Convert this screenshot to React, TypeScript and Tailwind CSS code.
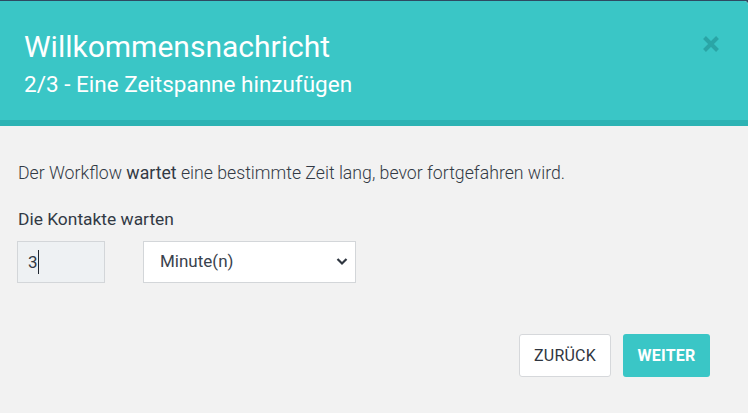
import React, { useState } from 'react';

const CloseIcon: React.FC = () => (
  <svg width="18" height="18" viewBox="0 0 18 18" aria-hidden="true">
    <path d="M2.5 2.5 L15.5 15.5 M15.5 2.5 L2.5 15.5" stroke="#2aa5a6" strokeWidth="4" strokeLinecap="butt" />
  </svg>
);

const App: React.FC = () => {
  const [amount, setAmount] = useState('3');
  const [unit, setUnit] = useState('minutes');

  return (
    <div className="w-[748px] h-[413px] bg-[#2e4a62] pt-px overflow-hidden" style={{ fontFamily: 'Roboto, "Liberation Sans", sans-serif' }}>
      <div className="h-full flex flex-col bg-[#f2f2f2] rounded-tr-[4px] overflow-hidden">
        {/* header */}
        <div className="bg-[#3ac6c6] border-b-[6px] border-[#2db3b4] h-[125px] pl-6 pr-[28px] pt-[27px] flex justify-between">
          <div className="text-white">
            <h1 className="text-[30px] leading-[38px] font-normal">Willkommensnachricht</h1>
            <h2 className="text-[22.5px] leading-[28px] mt-[4px] font-normal">2/3 - Eine Zeitspanne hinzufügen</h2>
          </div>
          <button className="h-[18px] mt-[7px]">
            <CloseIcon />
          </button>
        </div>

        {/* body */}
        <div className="flex-1 px-[18px] pt-[35px] text-[#323a45]">
          <p className="text-[17.7px] leading-[24px] font-light">
            Der Workflow <span className="font-normal">wartet</span> eine bestimmte Zeit lang, bevor fortgefahren wird.
          </p>
          <label className="block mt-[22px] text-[17.4px] leading-[24px] font-normal">Die Kontakte warten</label>
          <div className="flex items-center gap-[38px] mt-[10px]">
            <div className="relative -ml-px">
              <input
                value={amount}
                onChange={(e) => setAmount(e.target.value)}
                className="w-[88px] h-[42px] bg-[#eef1f3] border border-[#d3d6d9] px-[10px] text-[17px] text-[#323a45] outline-none"
              />
              {/* text caret */}
              <span className="absolute left-[21px] top-[9px] w-px h-[24px] bg-[#1f2630]" />
            </div>
            <div className="relative">
              <select
                value={unit}
                onChange={(e) => setUnit(e.target.value)}
                className="appearance-none w-[213px] h-[42px] bg-white border border-[#d3d6d9] pl-[16px] text-[17px] text-[#3a424d] outline-none"
              >
                <option value="minutes">Minute(n)</option>
                <option value="hours">Stunde(n)</option>
                <option value="days">Tag(e)</option>
              </select>
              <svg className="absolute right-[8px] top-[16px] pointer-events-none" width="12" height="9" viewBox="0 0 12 9">
                <path d="M1.5 2 L6 6.5 L10.5 2" fill="none" stroke="#2f3640" strokeWidth="2.2" />
              </svg>
            </div>
          </div>

          <div className="flex justify-end gap-[12px] mt-[51px] pr-[20px]">
            <button className="w-[92px] h-[43px] bg-white border border-[#d6d8db] rounded-[3px] text-[16px] font-normal text-[#2f3640] tracking-[0.2px]">
              ZURÜCK
            </button>
            <button className="w-[87px] h-[43px] bg-[#3ac6c6] rounded-[3px] text-[16px] font-bold text-white tracking-[0.2px]">
              WEITER
            </button>
          </div>
        </div>
      </div>
    </div>
  );
};

export default App;
